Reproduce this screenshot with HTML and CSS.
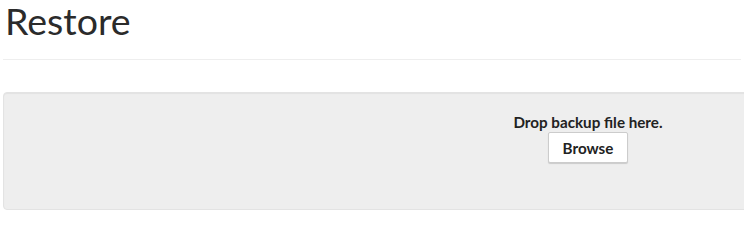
FILE: index.html
```html
<!DOCTYPE html>
<html>
<head>
<meta charset="utf-8">
<link rel="stylesheet" href="styles.css">
</head>
<body>
<div class="page">
  <h1 class="title">Restore</h1>
  <hr class="rule">
  <div class="dropzone">
    <div class="drop-text">Drop backup file here.</div>
    <button class="btn">Browse</button>
  </div>
</div>
</body>
</html>
```
FILE: styles.css
```css
html, body {
  margin: 0;
  padding: 0;
  background: #fff;
  overflow: hidden;
}
body {
  font-family: Lato, "Liberation Sans", sans-serif;
  color: #333;
}
.page {
  padding: 0 3px;
}
.title {
  font-family: Lato, sans-serif;
  font-weight: 400;
  font-size: 37.5px;
  line-height: 40px;
  margin: 0 0 0 2px;
  padding-top: 1px;
  color: #2b2b2b;
}
.rule {
  border: 0;
  border-top: 1px solid #eeeeee;
  margin: 18px 0 32px 0;
}
.dropzone {
  width: 1170px;
  box-sizing: border-box;
  background: #eeeeee;
  border: 1px solid #e3e3e3;
  border-radius: 4px;
  padding: 19px 0 46px;
  display: flex;
  flex-direction: column;
  align-items: center;
  box-shadow: inset 0 1px 1px rgba(0,0,0,0.05);
}
.drop-text {
  font-weight: 700;
  font-size: 15.2px;
  line-height: 20px;
  color: #222;
}
.btn {
  font-family: Lato, sans-serif;
  font-weight: 700;
  font-size: 15.2px;
  line-height: 20px;
  color: #222;
  background: #fff;
  border: 1px solid #ccc;
  border-radius: 2px;
  padding: 5px 14px 4px;
  box-shadow: 0 1px 1px rgba(0,0,0,0.15);
  cursor: pointer;
}
```
